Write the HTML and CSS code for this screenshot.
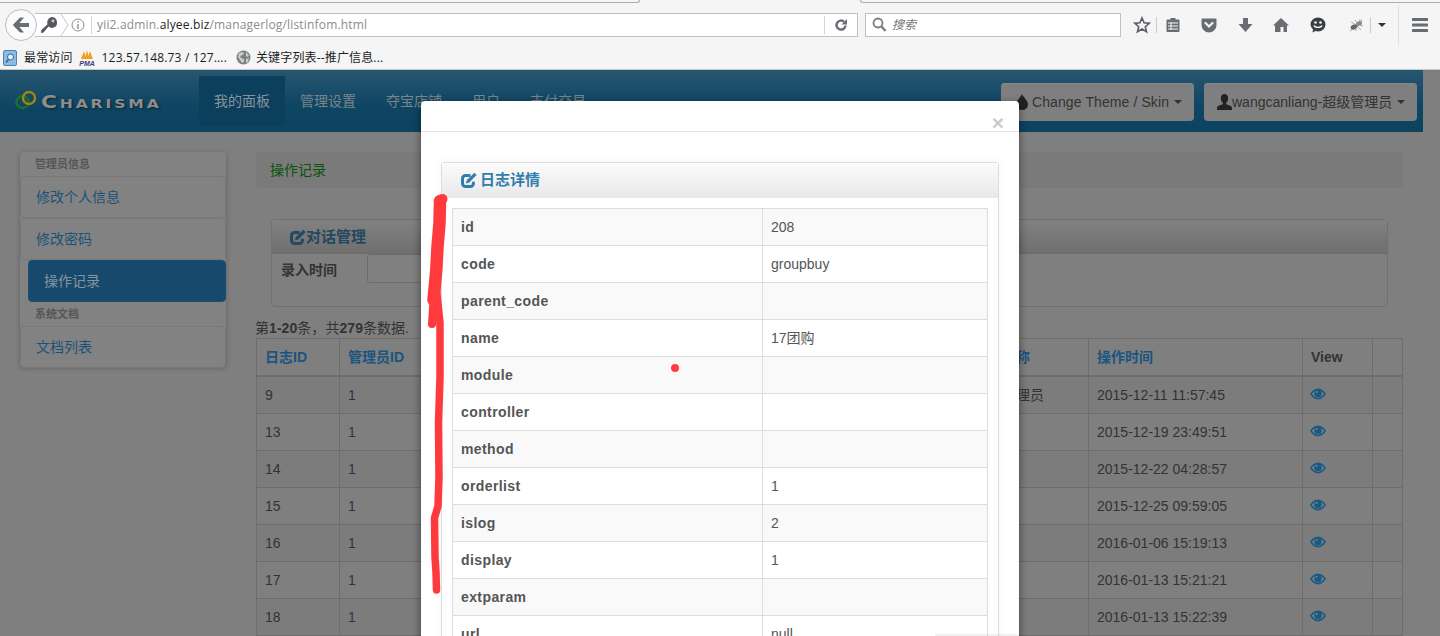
FILE: index.html
```html
<!DOCTYPE html>
<html lang="zh-CN">
<head>
    <meta charset="UTF-8">
    <meta name="viewport" content="width=device-width, initial-scale=1.0">
    <title>操作记录</title>
    <link rel="stylesheet" href="styles.css">
</head>
<body>
    <svg width="0" height="0" class="defs">
        <symbol id="edit" viewBox="0 0 16 16">
            <path d="M12.4 9.800v1.700a3 3 0 0 1-3 3H4.500a3 3 0 0 1-3-3V6.500a3 3 0 0 1 3-3h5" fill="none" stroke="currentColor" stroke-width="3"/>
            <path d="M13.400.8l2.200 2.200-7.400 7.400-3.400 1.100 1.100-3.400z" fill="currentColor"/>
        </symbol>
        <symbol id="eye" viewBox="0 0 16 14">
            <path fill-rule="evenodd" fill="currentColor" d="M8 1.500c3.300 0 6.200 2.200 8 5.300-1.800 3.300-4.700 5.700-8 5.700S1.800 10.100 0 6.800C1.800 3.700 4.700 1.500 8 1.500zM8 3.200c-2.500 0-4.700 1.500-6.200 3.600 1.500 2.300 3.700 3.900 6.200 3.900s4.700-1.600 6.200-3.900C12.700 4.700 10.500 3.200 8 3.200z"/>
            <circle cx="8" cy="6.400" r="3.700" fill="currentColor"/>
            <circle cx="6.600" cy="5" r="1" fill="#7f7f7f"/>
        </symbol>
    </svg>

    <header class="browser">
        <div class="tab-strip">
            <span class="tab-line left"></span>
            <span class="tab-line right"></span>
        </div>
        <div class="toolbar">
            <div class="back-btn">
                <svg width="18" height="16" viewBox="0 0 18 16"><path d="M8 .5L.8 8 8 15.500h4L7.500 10H17V6H7.500L12 .5z" fill="#6a6e73"/></svg>
            </div>
            <div class="urlbar">
                <svg class="key" width="18" height="18" viewBox="0 0 18 18"><path d="M11.500 1a5.500 5.500 0 0 1 1.500 10.800 5.500 5.500 0 0 1-4.500-1.300L3.500 16.500 1 17l.2-2.800 6.300-6A5.500 5.500 0 0 1 11.500 1z" fill="#55585c"/><circle cx="13" cy="5" r="1.400" fill="#c9ccd0"/></svg>
                <svg class="chevron" width="9" height="24" viewBox="0 0 9 24"><path d="M1 1l7 11-7 11" fill="none" stroke="#c2c7ce"/></svg>
                <svg class="info" width="14" height="14" viewBox="0 0 14 14"><circle cx="7" cy="7" r="6" fill="none" stroke="#8d8d8d"/><path d="M6.300 3h1.400v1.500H6.300zM6.300 6h1.400v5H6.300z" fill="#8d8d8d"/></svg>
                <span class="url-sep"></span>
                <span class="url-text">yii2.admin.<b>alyee.biz</b>/managerlog/listinfom.html</span>
                <span class="url-sep reload-sep"></span>
                <svg class="reload" width="14" height="14" viewBox="0 0 14 14"><path d="M11.500 7.500a4.500 4.500 0 1 1-1.400-3.700" fill="none" stroke="#6a6e73" stroke-width="2.500"/><path d="M13 1v5.500H7.500z" fill="#6a6e73"/></svg>
            </div>
            <div class="searchbar">
                <svg width="15" height="15" viewBox="0 0 15 15"><circle cx="6" cy="6" r="4.500" fill="none" stroke="#7d7d7d" stroke-width="1.800"/><path d="M9.500 9.500l4 4.500" stroke="#7d7d7d" stroke-width="2.400"/></svg>
                <span class="search-hint">搜索</span>
            </div>
            <div class="tool-icons">
                <svg class="ti-star" width="18" height="18" viewBox="0 0 18 18"><path d="M9 2l2.100 4.800 5.100.5-3.900 3.400 1.200 5.100L9 13.100l-4.500 2.700 1.200-5.100-3.900-3.400 5.100-.5z" fill="none" stroke="#5f6368" stroke-width="1.700"/></svg>
                <span class="tool-sep"></span>
                <svg class="ti-clip" width="16" height="16" viewBox="0 0 16 16"><path d="M2.500 2.500H5.500V1h5v1.500h3a1 1 0 0 1 1 1v10.500a1 1 0 0 1-1 1h-11a1 1 0 0 1-1-1V3.500a1 1 0 0 1 1-1z" fill="#696c70"/><path d="M3 6h10M3 9h10M3 12h10M6 5v8" stroke="#f5f5f5"/></svg>
                <svg class="ti-pocket" width="16" height="16" viewBox="0 0 16 16"><path d="M1.500 1.500h13a1 1 0 0 1 1 1V8a7.500 7.500 0 0 1-15 0V2.500a1 1 0 0 1 1-1z" fill="#696c70"/><path d="M4.500 6L8 9.500 11.500 6" fill="none" stroke="#f5f5f5" stroke-width="2.200" stroke-linecap="round"/></svg>
                <svg class="ti-down" width="15" height="16" viewBox="0 0 15 16"><path d="M5 1h5v6h4.500L7.500 15 .5 7H5z" fill="#696c70"/></svg>
                <svg class="ti-home" width="16" height="16" viewBox="0 0 16 16"><path d="M8 1l8 7.500h-2V15h-3.500v-5h-3v5H2V8.500H0z" fill="#696c70"/></svg>
                <svg class="ti-chat" width="16" height="16" viewBox="0 0 16 16"><path d="M8 .5a7.500 7 0 0 1 0 14c-1 0-1.800-.1-2.600-.4L2.500 15.500l.5-3A7 7 0 0 1 .5 7.500 7.500 7 0 0 1 8 .5z" fill="#3c3f42"/><circle cx="5.500" cy="5.500" r="1.300" fill="#f5f5f5"/><circle cx="10.500" cy="5.500" r="1.300" fill="#f5f5f5"/><path d="M4 8.500c1 2.500 7 2.500 8 0" fill="none" stroke="#f5f5f5" stroke-width="1.400"/></svg>
                <svg class="ti-ant" width="18" height="14" viewBox="0 0 16 14"><ellipse cx="5" cy="9" rx="3.500" ry="2.400" fill="#666" transform="rotate(-25 5 9)"/><ellipse cx="10" cy="5.500" rx="3" ry="2.300" fill="#8a8a8a" transform="rotate(-25 10 5.500)"/><path d="M2 4l4 2M6 2l2 3M11 1l0 3M13 2l-1 3M14 8L10 7M12 12L8 8M7 13l0-3M1 13l3-2" stroke="#9a9a9a" stroke-width=".8"/></svg>
                <span class="tool-sep ant-sep"></span>
                <span class="tool-caret"></span>
                <span class="tool-sep menu-sep"></span>
                <svg class="ti-menu" width="16" height="14" viewBox="0 0 16 14"><path d="M1 0h14a1 1 0 0 1 0 3H1a1 1 0 0 1 0-3zM1 5.500h14a1 1 0 0 1 0 3H1a1 1 0 0 1 0-3zM1 11h14a1 1 0 0 1 0 3H1a1 1 0 0 1 0-3z" fill="#696c70"/></svg>
            </div>
        </div>
        <div class="bookmarks">
            <svg class="bm-folder" width="15" height="16" viewBox="0 0 15 16"><rect x=".5" y=".5" width="13" height="15" rx="1.500" fill="#8db9e2" stroke="#4d82b8"/><circle cx="7.500" cy="7" r="3" fill="#e6f1fa" stroke="#2f639b"/><path d="M5.500 9.500L3 12.500" stroke="#2f639b" stroke-width="1.500"/></svg>
            <span class="bm-text">最常访问</span>
            <svg class="bm-pma" width="16" height="16" viewBox="0 0 16 16"><path d="M2 9L5 1l1.500 5L8 0l1.500 6L11 1l3 8z" fill="#f2a11f"/><text x="8" y="15.500" class="pma-text">PMA</text></svg>
            <span class="bm-text">123.57.148.73 / 127....</span>
            <svg class="bm-globe" width="15" height="15" viewBox="0 0 15 15"><circle cx="7.500" cy="7.500" r="7" fill="#7d8082"/><path d="M3 3l3-1 2 1-1 2-3 1 1 2 3 1 0 3-2 1-2-3-2-3zM10 2l3 3-1 2-2-1zM10 9l3-1-1 4-2 1z" fill="#c9cbcc"/></svg>
            <span class="bm-text">关键字列表--推广信息...</span>
        </div>
    </header>

    <div class="page">
        <nav class="navbar">
            <div class="brand">
                <svg width="26" height="22" viewBox="0 0 26 22"><circle cx="8.500" cy="13" r="6" fill="none" stroke="#1f6f2c" stroke-width="2.400"/><circle cx="15" cy="9" r="6" fill="none" stroke="#a78410" stroke-width="2.400"/></svg>
                <span class="brand-name">Charisma</span>
            </div>
            <ul class="nav-menu">
                <li class="active">我的面板</li>
                <li>管理设置</li>
                <li>夺宝店铺</li>
                <li>用户</li>
                <li>支付交易</li>
            </ul>
            <div class="nav-right">
                <div class="nav-btn theme-btn">
                    <svg width="12" height="16" viewBox="0 0 12 16"><path d="M6 0c1 3 6 6.500 6 10.500a6 5.500 0 0 1-12 0C0 6.500 5 3 6 0z" fill="#222"/></svg>
                    <span>Change Theme / Skin</span><i class="caret"></i>
                </div>
                <div class="nav-btn user-btn">
                    <svg width="15" height="16" viewBox="0 0 15 16"><path d="M7.500 0c2.400 0 3.700 2 3.700 4.300 0 2-.9 3.700-2 4.500v1.500c1.700.7 5.800 1.500 5.800 3.700v2H0v-2c0-2.200 4.100-3 5.800-3.700V8.800c-1.100-.8-2-2.500-2-4.500C3.800 2 5.100 0 7.500 0z" fill="#222"/></svg>
                    <span>wangcanliang-超级管理员</span><i class="caret"></i>
                </div>
            </div>
        </nav>

        <div class="content">
            <aside class="sidebar">
                <div class="side-head">管理员信息</div>
                <a class="side-item">修改个人信息</a>
                <a class="side-item">修改密码</a>
                <a class="side-item active">操作记录</a>
                <div class="side-head second">系统文档</div>
                <a class="side-item">文档列表</a>
            </aside>

            <main class="main">
                <div class="breadcrumb">操作记录</div>

                <section class="filter-box">
                    <h2 class="filter-title"><svg width="16" height="16"><use href="#edit"/></svg>对话管理</h2>
                    <div class="filter-body">
                        <label>录入时间</label>
                        <input type="text" class="filter-input">
                    </div>
                </section>

                <p class="summary">第<b>1-20</b>条，共<b>279</b>条数据.</p>

                <table class="log-table">
                    <colgroup>
                        <col class="c-id"><col class="c-admin"><col class="c-code"><col class="c-name"><col class="c-nick"><col class="c-time"><col class="c-view"><col class="c-last">
                    </colgroup>
                    <thead>
                        <tr><th><a>日志ID</a></th><th><a>管理员ID</a></th><th></th><th></th><th><a>用户昵称</a></th><th><a>操作时间</a></th><th>View</th><th></th></tr>
                    </thead>
                    <tbody id="logRows"></tbody>
                </table>
            </main>
        </div>

        <div class="modal">
            <div class="modal-head"><span class="close">×</span></div>
            <div class="modal-body">
                <section class="detail-box">
                    <h2 class="detail-title"><svg width="16" height="16"><use href="#edit"/></svg>日志详情</h2>
                    <div class="detail-body">
                        <table class="detail-table">
                            <tbody>
                                <tr><th>id</th><td>208</td></tr>
                                <tr><th>code</th><td>groupbuy</td></tr>
                                <tr><th>parent_code</th><td></td></tr>
                                <tr><th>name</th><td>17团购</td></tr>
                                <tr><th>module</th><td></td></tr>
                                <tr><th>controller</th><td></td></tr>
                                <tr><th>method</th><td></td></tr>
                                <tr><th>orderlist</th><td>1</td></tr>
                                <tr><th>islog</th><td>2</td></tr>
                                <tr><th>display</th><td>1</td></tr>
                                <tr><th>extparam</th><td></td></tr>
                                <tr><th>url</th><td>null</td></tr>
                            </tbody>
                        </table>
                    </div>
                </section>
            </div>
        </div>
    </div>

    <!-- red marks drawn on the screenshot -->
    <svg class="marks" width="1440" height="636" viewBox="0 0 1440 636">
        <g fill="none" stroke="#ff3a3c" stroke-linecap="round" stroke-linejoin="round">
            <path stroke-width="12.500" d="M440 201L439.500 223 437.500 247 436.300 270 433.500 300"/>
            <path stroke-width="8" d="M433.500 300L432 324"/>
            <path stroke-width="7.500" d="M436 285L440 323 440 377 438.500 423 439 477 438 506 434.500 518 435 557 436 572 436.500 590"/>
        </g>
        <circle cx="442.500" cy="199" r="5" fill="#ff3a3c"/>
        <circle cx="675" cy="368" r="4" fill="#ff3a3c"/>
    </svg>

    <script>
        // rows of the table behind the dialog
        const logs = [
            ['9', '2015-12-11 11:57:45', '超级管理员'],
            ['13', '2015-12-19 23:49:51', ''],
            ['14', '2015-12-22 04:28:57', ''],
            ['15', '2015-12-25 09:59:05', ''],
            ['16', '2016-01-06 15:19:13', ''],
            ['17', '2016-01-13 15:21:21', ''],
            ['18', '2016-01-13 15:22:39', '']
        ];
        const eye = '<svg class="eye" width="16" height="14"><use href="#eye"/></svg>';
        document.getElementById('logRows').innerHTML = logs.map(function (row) {
            return `<tr><td>${row[0]}</td><td>1</td><td></td><td></td><td>${row[2]}</td><td>${row[1]}</td><td>${eye}</td><td></td></tr>`;
        }).join('');
    </script>
</body>
</html>
```

FILE: styles.css
```css
* {
    box-sizing: border-box;
}

body {
    margin: 0;
    width: 1440px;
    height: 636px;
    overflow: hidden;
    position: relative;
    background-color: #7f7f7f;
    font-family: "Liberation Sans", "Noto Sans CJK SC", sans-serif;
    font-size: 14px;
    line-height: 20px;
}

.defs {
    position: absolute;
}

/* browser frame */
.browser {
    height: 70px;
    background-color: #f5f5f6;
    border-bottom: 1px solid #c4c6c9;
    font-family: "Open Sans", "Noto Sans CJK SC", sans-serif;
}

.tab-strip {
    height: 3px;
    display: flex;
}

.tab-line {
    height: 3px;
    border-bottom: 1px solid #a9aeb6;
}

.tab-line.left {
    width: 640px;
    border-right: 1px solid #a9aeb6;
    border-bottom-right-radius: 6px;
}

.tab-line.right {
    width: 580px;
    margin-left: 220px;
    flex: 1;
    border-left: 1px solid #a9aeb6;
    border-bottom-left-radius: 6px;
}

.toolbar {
    height: 43px;
    display: flex;
    align-items: center;
    padding-left: 5px;
}

.back-btn {
    width: 32px;
    height: 32px;
    border-radius: 50%;
    border: 1px solid #b4bcc8;
    background-color: #fbfbfb;
    display: flex;
    align-items: center;
    justify-content: center;
    flex: none;
    position: relative;
    z-index: 1;
}

.urlbar {
    width: 823px;
    height: 24px;
    margin-left: -2px;
    background-color: #fff;
    border: 1px solid #b9c1cd;
    border-left: none;
    display: flex;
    align-items: center;
    font-size: 12px;
}

.key {
    margin-left: 5px;
    flex: none;
}

.chevron {
    margin-left: 2px;
    flex: none;
}

.info {
    margin-left: 2px;
    flex: none;
}

.url-sep {
    width: 1px;
    height: 18px;
    background-color: #d5d7da;
    margin-left: 6px;
}

.url-text {
    margin-left: 5px;
    color: #8c8c8c;
    white-space: nowrap;
    letter-spacing: .17px;
}

.url-text b {
    color: #222;
    font-weight: normal;
}

.reload-sep {
    margin-left: auto;
}

.reload {
    margin: 0 9px;
    flex: none;
}

.searchbar {
    width: 256px;
    height: 24px;
    margin-left: 7px;
    background-color: #fff;
    border: 1px solid #b9c1cd;
    display: flex;
    align-items: center;
    padding-left: 6px;
}

.search-hint {
    margin-left: 5px;
    font-size: 12px;
    font-style: italic;
    color: #777;
}

.tool-icons {
    flex: 1;
    height: 43px;
    display: flex;
    align-items: center;
}

.tool-icons svg {
    flex: none;
}

.ti-star { margin-left: 12px; }
.tool-sep { width: 1px; height: 16px; background-color: #c9cbce; flex: none; }
.tool-sep:first-of-type { margin-left: 5px; }
.ti-clip { margin-left: 8px; }
.ti-pocket { margin-left: 20px; }
.ti-down { margin-left: 21px; }
.ti-home { margin-left: 20px; }
.ti-chat { margin-left: 21px; }
.ti-ant { margin-left: 22px; }
.ant-sep { margin-left: 4px; }

.tool-caret {
    margin-left: 7px;
    width: 0;
    height: 0;
    border-left: 4px solid transparent;
    border-right: 4px solid transparent;
    border-top: 4px solid #333;
    flex: none;
}

.menu-sep {
    margin-left: 12px;
    height: 40px;
    background-color: #dedfe1;
}

.ti-menu { margin-left: 13px; }

.bookmarks {
    height: 23px;
    display: flex;
    align-items: center;
    padding-left: 3px;
}

.bm-text {
    font-size: 12px;
    color: #1c1c1c;
    white-space: nowrap;
    letter-spacing: .15px;
}

.bm-folder { margin-right: 6px; }
.bm-pma { margin: 0 7px 0 6px; }
.bm-globe { margin: 0 5px 0 9px; }

.pma-text {
    font-family: "Liberation Sans", sans-serif;
    font-size: 7px;
    font-weight: bold;
    font-style: italic;
    text-anchor: middle;
    fill: #38407a;
}

/* page behind the dialog */
.page {
    height: 566px;
    position: relative;
    overflow: hidden;
}

.navbar {
    width: 1423px;
    height: 62px;
    display: flex;
    background: linear-gradient(#275670, #0d4563 60%, #0c4361);
    padding-left: 15px;
}

.brand {
    width: 184px;
    display: flex;
    align-items: center;
}

.brand svg {
    margin-top: -2px;
    margin-left: -1px;
}

.brand-name {
    font-family: "DejaVu Sans", sans-serif;
    font-size: 18px;
    font-weight: bold;
    font-variant: small-caps;
    letter-spacing: 2.400px;
    color: #8d8d8d;
    text-shadow: 1px 1px 2px #123;
    margin: 2px 0 0 1px;
    transform: scaleX(1.2);
    transform-origin: left center;
}

.nav-menu {
    list-style: none;
    margin: 6px 0 0;
    padding: 0;
    display: flex;
}

.nav-menu li {
    height: 50px;
    padding: 15px;
    color: #7a858b;
}

.nav-menu li.active {
    background-color: #0c3f5b;
    color: #85949c;
}

.nav-right {
    margin-left: auto;
    display: flex;
    gap: 10px;
    padding: 13px 6px 0 0;
}

.nav-btn {
    height: 38px;
    border-radius: 4px;
    background-color: #7f7f7f;
    box-shadow: inset 0 1px 0 #868686;
    color: #333;
    display: flex;
    align-items: center;
}

.theme-btn {
    width: 193px;
    padding-left: 15px;
    letter-spacing: .1px;
}

.theme-btn span {
    margin-left: 4px;
}

.user-btn {
    width: 213px;
    padding-left: 13px;
}

.caret {
    margin-left: 5px;
    width: 0;
    height: 0;
    border-left: 4px solid transparent;
    border-right: 4px solid transparent;
    border-top: 4px solid #333;
}

.content {
    display: flex;
    padding: 20px 37px 0 20px;
}

.sidebar {
    width: 206px;
    height: 215px;
    flex: none;
    background-color: #828282;
    border-radius: 4px;
    box-shadow: 0 1px 5px rgba(0, 0, 0, .25);
}

.side-head {
    height: 24px;
    padding: 2px 0 0 15px;
    font-size: 11px;
    font-weight: bold;
    color: #565656;
}

.side-item {
    display: block;
    height: 42px;
    padding: 10px 15px;
    color: #1b5277;
    border: 1px solid #787878;
    border-radius: 4px;
}

.side-item.active {
    margin-left: 8px;
    background-color: #16496c;
    border-color: #194f73;
    color: #84959f;
}

.main {
    flex: 1;
    margin-left: 30px;
}

.breadcrumb {
    height: 36px;
    padding: 8px 14px;
    background-color: #7a7a7a;
    border-radius: 4px;
    color: #0b520b;
}

.filter-box {
    margin: 31px 15px 0;
    height: 88px;
    border: 1px solid #707070;
    border-radius: 4px;
}

.filter-title {
    margin: 0;
    height: 34px;
    padding: 7px 18px;
    font-size: 15px;
    line-height: 20px;
    color: #23485f;
    background: linear-gradient(#818181, #6f6f6f);
    border-bottom: 1px solid #6c6c6c;
    display: flex;
    align-items: center;
}

.filter-body {
    display: flex;
    padding-left: 9px;
}

.filter-body label {
    font-weight: bold;
    color: #333;
    margin-top: 6px;
}

.filter-input {
    margin-left: 30px;
    width: 300px;
    height: 29px;
    background-color: #808080;
    border: 1px solid #6b6b6b;
    border-radius: 3px;
}

.summary {
    margin: 11px 0 0 -1px;
    height: 20px;
    color: #333;
    letter-spacing: .05px;
}

.log-table {
    width: 1147px;
    table-layout: fixed;
    border-collapse: collapse;
    color: #333;
}

.c-id { width: 83px; }
.c-admin { width: 110px; }
.c-code { width: 250px; }
.c-name { width: 266px; }
.c-nick { width: 123px; }
.c-time { width: 214px; }
.c-view { width: 70px; }

.log-table th,
.log-table td {
    height: 37px;
    padding: 8px;
    border: 1px solid #6d6d6d;
    text-align: left;
}

.log-table th {
    border-bottom-width: 2px;
}

.log-table th a {
    color: #1a5480;
}

.log-table tbody tr:nth-child(odd) {
    background-color: #7c7c7c;
}

.eye {
    color: #175a86;
    display: block;
    margin: -3px 0 0 -1px;
}

/* dialog */
.modal {
    position: absolute;
    top: 31px;
    left: 421px;
    width: 598px;
    height: 560px;
    background-color: #fff;
    border-radius: 4px 4px 0 0;
    box-shadow: 0 3px 9px rgba(0, 0, 0, .5);
}

/* faint shade at the bottom edge of the capture */
.modal::after {
    content: "";
    position: absolute;
    top: 532px;
    left: 514px;
    width: 84px;
    height: 3px;
    background: linear-gradient(rgba(0, 0, 0, 0), rgba(0, 0, 0, .08));
}

.modal-head {
    height: 31px;
    border-bottom: 1px solid #e5e5e5;
    position: relative;
}

.close {
    position: absolute;
    top: 11px;
    right: 15px;
    font-size: 21px;
    line-height: 21px;
    font-weight: bold;
    color: #ccc;
}

.modal-body {
    padding: 30px 20px;
}

.detail-box {
    border: 1px solid #ddd;
    border-radius: 3px;
    box-shadow: 0 0 10px rgba(0, 0, 0, .05);
}

.detail-title {
    margin: 0;
    height: 35px;
    padding: 0 19px 1px;
    font-size: 15px;
    color: #317eac;
    background: linear-gradient(#fbfbfb, #e8e8e8);
    display: flex;
    align-items: center;
    gap: 3px;
}

.detail-body {
    padding: 10px;
}

.detail-table {
    width: 536px;
    table-layout: fixed;
    border-collapse: collapse;
    color: #555;
}

.detail-table th,
.detail-table td {
    height: 37px;
    padding: 8px;
    border: 1px solid #ddd;
    text-align: left;
}

.detail-table th {
    width: 310px;
    letter-spacing: .4px;
}

.detail-table tr:nth-child(odd) {
    background-color: #f9f9f9;
}

.marks {
    position: absolute;
    top: 0;
    left: 0;
    pointer-events: none;
}
```
